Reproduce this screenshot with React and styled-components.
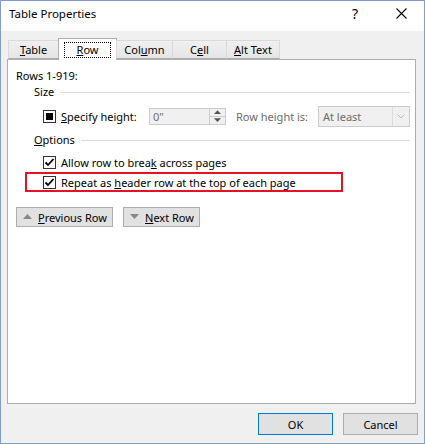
import React from 'react';
import styled, { createGlobalStyle } from 'styled-components';

const Global = createGlobalStyle`
  html, body { margin: 0; padding: 0; background: #fff; }
  body { font-family: "Noto Sans", "Open Sans", sans-serif; font-size: 11px; color: #000; white-space: nowrap; }
  * { box-sizing: border-box; }
`;

const Window = styled.div`
  width: 425px;
  height: 444px;
  border: 1px solid #7f9fd3;
  background: #f0f0f0;
  display: flex;
  flex-direction: column;
`;

const TitleBar = styled.div`
  height: 30px;
  background: #fff;
  display: flex;
  align-items: center;
  padding-left: 8px;
  font-size: 11.5px;
`;

const Title = styled.div`
  flex: 1;
  margin-top: -5px;
`;

const TitleBtn = styled.div`
  width: 46px;
  height: 30px;
  display: flex;
  align-items: center;
  justify-content: center;
  margin-top: -6px;
  font-size: 14px;
`;

const Body = styled.div`
  flex: 1;
  padding: 7px 8px 0 6px;
  display: flex;
  flex-direction: column;
`;

const TabStrip = styled.div`
  display: flex;
  align-items: flex-end;
  padding-left: 1px;
  position: relative;
  z-index: 1;
`;

const Tab = styled.div`
  width: ${p => p.$w}px;
  height: ${p => (p.$active ? 22 : 19)}px;
  border: 1px solid ${p => (p.$active ? '#adadad' : '#d9d9d9')};
  border-bottom: ${p => (p.$active ? 'none' : '1px solid #adadad')};
  background: ${p => (p.$active ? '#fff' : 'linear-gradient(#f0f0f0, #e5e5e5)')};
  margin-left: ${p => (p.$first ? 0 : -1)}px;
  margin-bottom: ${p => (p.$active ? -1 : 0)}px;
  display: flex;
  align-items: center;
  justify-content: center;
`;

const Focus = styled.span`
  border: 1px dotted #000;
  padding: 0 12px;
  line-height: 14px;
`;

const Panel = styled.div`
  width: 409px;
  height: 345px;
  border: 1px solid #adadad;
  background: #fff;
  padding: 8px 5px 0 8px;
  display: flex;
  flex-direction: column;
`;

const Line = styled.div`
  height: 16px;
  line-height: 16px;
  display: flex;
  align-items: center;
  margin-left: ${p => p.$indent || 0}px;
  margin-top: ${p => p.$top || 0}px;
`;

const Rule = styled.div`
  flex: 1;
  border-top: 1px solid #dcdcdc;
  margin-left: 6px;
`;

const Row = styled.div`
  display: flex;
  align-items: center;
  height: ${p => p.$h || 20}px;
  margin-left: ${p => p.$indent || 0}px;
  margin-top: ${p => p.$top || 0}px;
`;

const Box = styled.span`
  width: 13px;
  height: 13px;
  border: 1px solid #333;
  background: #fff;
  display: inline-flex;
  align-items: center;
  justify-content: center;
  margin-right: 5px;
  flex: none;
`;

const Dot = styled.span`
  width: 7px;
  height: 7px;
  background: #000;
`;

const Label = styled.span`
  color: ${p => (p.$dim ? '#6d6d6d' : '#000')};
  margin-left: ${p => p.$ml || 0}px;
  width: ${p => (p.$w ? `${p.$w}px` : 'auto')};
  flex: none;
`;

const Spin = styled.div`
  width: 77px;
  height: 17px;
  border: 1px solid #ccc;
  background: #f0f0f0;
  display: flex;
  color: #6d6d6d;
  flex: none;
`;

const SpinText = styled.div`
  flex: 1;
  padding-left: 3px;
  line-height: 15px;
`;

const SpinBtns = styled.div`
  width: 16px;
  border-left: 1px solid #ccc;
  display: flex;
  flex-direction: column;
`;

const SpinHalf = styled.div`
  flex: 1;
  display: flex;
  align-items: center;
  justify-content: center;
  border-top: ${p => (p.$bottom ? '1px solid #ccc' : 'none')};
`;

const Select = styled.div`
  width: 92px;
  height: 21px;
  border: 1px solid #ccc;
  background: #f0f0f0;
  display: flex;
  color: #6d6d6d;
  flex: none;
`;

const SelectText = styled.div`
  flex: 1;
  padding-left: 4px;
  line-height: 19px;
`;

const SelectArrow = styled.div`
  width: 17px;
  border-left: 1px solid #dcdcdc;
  display: flex;
  align-items: center;
  justify-content: center;
`;

const Highlight = styled.div`
  margin-left: 9px;
  width: 318px;
  height: 20px;
  border: 2px solid #e81123;
  display: flex;
  align-items: center;
  padding-left: 16px;
`;

const Buttons = styled.div`
  display: flex;
  gap: 10px;
  margin-top: 15px;
`;

const NavBtn = styled.button`
  width: ${p => p.$w}px;
  height: 20px;
  border: 1px solid #adadad;
  background: #e1e1e1;
  font: inherit;
  color: #000;
  display: flex;
  align-items: center;
  padding: 0 0 0 6px;
  gap: 6px;
`;

const Footer = styled.div`
  display: flex;
  justify-content: flex-end;
  gap: 10px;
  margin-top: 9px;
  margin-right: -2px;
`;

const DlgBtn = styled.button`
  width: 75px;
  height: 22px;
  border: 1px solid ${p => (p.$default ? '#0078d7' : '#adadad')};
  background: #e1e1e1;
  font: inherit;
  color: #000;
  padding: 0;
`;

const Check = () => (
  <svg width="11" height="11" viewBox="0 0 11 11">
    <path d="M1.5 5.5 L4 8 L9.5 2" fill="none" stroke="#000" strokeWidth="1.8" />
  </svg>
);

const Tri = ({ down, color = '#666', size = 9 }) => (
  <svg width={size} height={size / 2 + 1} viewBox="0 0 10 6">
    <path d={down ? 'M0 0 L10 0 L5 5.5 Z' : 'M0 5.5 L10 5.5 L5 0 Z'} fill={color} />
  </svg>
);

export default function App() {
  return (
    <>
      <Global />
      <Window>
        <TitleBar>
          <Title>Table Properties</Title>
          <TitleBtn>?</TitleBtn>
          <TitleBtn>
            <svg width="11" height="11" viewBox="0 0 11 11">
              <path d="M0.5 0.5 L10.5 10.5 M10.5 0.5 L0.5 10.5" stroke="#000" strokeWidth="1.1" />
            </svg>
          </TitleBtn>
        </TitleBar>
        <Body>
          <TabStrip>
            <Tab $w={51} $first><span><u>T</u>able</span></Tab>
            <Tab $w={59} $active><Focus><u>R</u>ow</Focus></Tab>
            <Tab $w={57}><span>Col<u>u</u>mn</span></Tab>
            <Tab $w={55}><span>C<u>e</u>ll</span></Tab>
            <Tab $w={54}><span><u>A</u>lt Text</span></Tab>
          </TabStrip>
          <Panel>
            <Line>Rows 1-919:</Line>
            <Line $indent={18}>Size<Rule /></Line>
            <Row $h={22} $top={5} $indent={27}>
              <Box><Dot /></Box>
              <Label $w={88}><u>S</u>pecify height:</Label>
              <Spin>
                <SpinText>0"</SpinText>
                <SpinBtns>
                  <SpinHalf><Tri size={7} color="#555" /></SpinHalf>
                  <SpinHalf $bottom><Tri down size={7} color="#555" /></SpinHalf>
                </SpinBtns>
              </Spin>
              <Label $dim $ml={10} $w={82}>Row height is:</Label>
              <Select>
                <SelectText>At least</SelectText>
                <SelectArrow>
                  <svg width="8" height="5" viewBox="0 0 8 5">
                    <path d="M0.5 0.5 L4 4 L7.5 0.5" fill="none" stroke="#bbb" strokeWidth="1" />
                  </svg>
                </SelectArrow>
              </Select>
            </Row>
            <Line $indent={18} $top={5}><span><u>O</u>ptions</span><Rule /></Line>
            <Row $h={19} $top={5} $indent={27}>
              <Box><Check /></Box>
              <Label>Allow row to brea<u>k</u> across pages</Label>
            </Row>
            <Highlight>
              <Box><Check /></Box>
              <Label>Repeat as <u>h</u>eader row at the top of each page</Label>
            </Highlight>
            <Buttons>
              <NavBtn $w={97}><Tri color="#888" /><span><u>P</u>revious Row</span></NavBtn>
              <NavBtn $w={77}><Tri down color="#888" /><span><u>N</u>ext Row</span></NavBtn>
            </Buttons>
          </Panel>
          <Footer>
            <DlgBtn $default>OK</DlgBtn>
            <DlgBtn>Cancel</DlgBtn>
          </Footer>
        </Body>
      </Window>
    </>
  );
}
